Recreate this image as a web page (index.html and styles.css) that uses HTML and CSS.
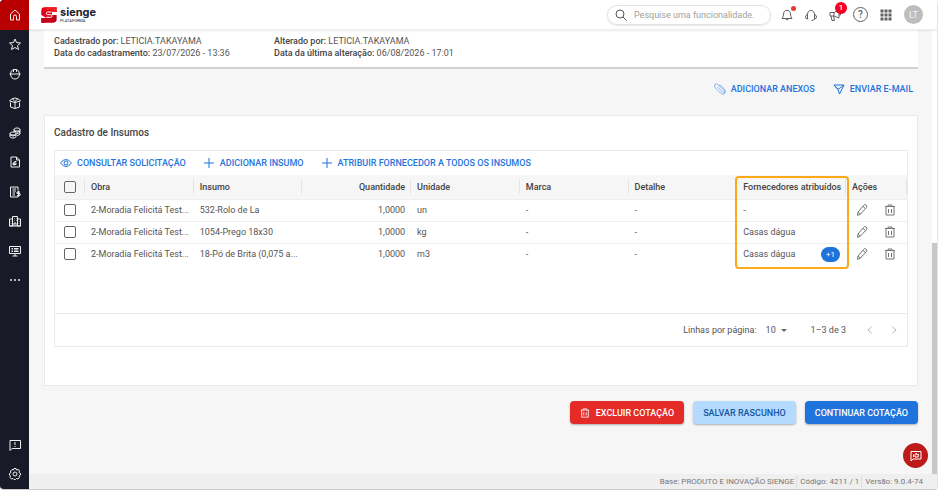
FILE: index.html
```html
<!DOCTYPE html>
<html lang="pt-BR">
	<head>
		<meta charset="UTF-8" />
		<meta name="viewport" content="width=device-width, initial-scale=1.0" />
		<title>Sienge Plataforma</title>
		<link rel="stylesheet" href="styles.css">
	</head>
	<body>
		<!-- shared icons -->
		<svg class="sprite" aria-hidden="true">
			<symbol id="plus" viewBox="0 0 24 24"><path d="M12 2v20M2 12h20" /></symbol>
			<symbol id="pencil" viewBox="0 0 24 24"><path d="M3 23l1-7L15 3q2-3 5-1t1 5L9 20zM14 5l5 4M4 16l5 4" /></symbol>
			<symbol id="trash" viewBox="0 0 24 24"><path d="M2 5h20M8 5V2h8v3M4 5v17h16V5M9 10v8M15 10v8" /></symbol>
		</svg>
		<div class="app">
			<nav class="sidebar">
				<div class="menu">
					<a class="menu-item active" href="#" aria-label="Início">
						<svg class="icon" viewBox="0 0 24 24"><path d="M3 10l9-8 9 8v12h-6v-7q0-3-3-3t-3 3v7H3z" /></svg>
					</a>
					<a class="menu-item" href="#" aria-label="Favoritos">
						<svg class="icon" viewBox="0 0 24 24"><path d="M12 2l3 7 8 1-6 5 2 8-7-4-7 4 2-8-6-5 8-1z" /></svg>
					</a>
					<a class="menu-item" href="#" aria-label="Engenharia">
						<svg class="icon" viewBox="0 0 24 24"><path d="M1 12h22M3 12q0-7 6-9v5M21 12q0-7-6-9v5M9 3h6M3 12q1 10 9 10t9-10" /></svg>
					</a>
					<a class="menu-item" href="#" aria-label="Suprimentos">
						<svg class="icon" viewBox="0 0 24 24"><path d="M3 11v9l9 3 9-3v-9M12 9v14M1 8l11 3 11-3-4-4-7-2-7 2zM7 4l5 5 5-5" /></svg>
					</a>
					<a class="menu-item" href="#" aria-label="Financeiro">
						<svg class="icon" viewBox="0 0 24 24"><path d="M10 5c0-4 12-4 12 0s-12 4-12 0v4M22 5v9q-2 3-6 3M10 8q6 4 12 1M15 13q5 0 7-2M2 13c0-4 12-4 12 0s-12 4-12 0v6c0 4 12 4 12 0v-6M2 16q6 4 12 0" /></svg>
					</a>
					<a class="menu-item" href="#" aria-label="Contabilidade">
						<svg class="icon" viewBox="0 0 24 24"><path d="M4 2h11l6 6v14H4zM15 2v6h6M15 11h-3q-2 0-2 3v5M8 14h6v3H8z" /></svg>
					</a>
					<a class="menu-item" href="#" aria-label="Comercial">
						<svg class="icon" viewBox="0 0 24 24"><path d="M18 9V2H3v20h15v-2M7 6h7M7 10h7M7 14h5M7 18h5M22 12h-6v3h6v4h-6M19 10v11" /></svg>
					</a>
					<a class="menu-item" href="#" aria-label="Patrimônio">
						<svg class="icon" viewBox="0 0 24 24"><path d="M7 22H1V8h6M17 8h6v14h-6M7 22V3h10v19M10 7h1M14 7h1M10 11h1M14 11h1M10 22v-6h4v6M4 12v1M20 12v1M4 17v1M20 17v1M1 22h22" /></svg>
					</a>
					<a class="menu-item" href="#" aria-label="Sistemas">
						<svg class="icon" viewBox="0 0 24 24"><path d="M1 3h22v14H1zM12 17v5M7 22h10M5 7h3M10 7h9M5 10h3M10 10h9M5 13h3M10 13h9" /></svg>
					</a>
					<a class="menu-item" href="#" aria-label="Mais">
						<svg class="icon solid" viewBox="0 0 24 24"><circle cx="4" cy="12" r="2" /><circle cx="12" cy="12" r="2" /><circle cx="20" cy="12" r="2" /></svg>
					</a>
				</div>
				<div class="menu-bottom">
					<a class="menu-item" href="#" aria-label="Avisos">
						<svg class="icon" viewBox="0 0 24 24"><path d="M2 3h21v16H6l-4 4zM12 6v6M12 14v2" /></svg>
					</a>
					<a class="menu-item" href="#" aria-label="Configurações">
						<svg class="icon" viewBox="0 0 24 24"><path d="M10 1h4l1 3 4-1 2 3-1 3 3 2v3l-3 2 1 3-3 3-3-1-2 2h-3l-2-2-3 1-3-3 1-3-2-2v-3l3-2-1-3 3-3 3 1z" /><circle cx="12" cy="12" r="4" /></svg>
					</a>
				</div>
			</nav>
			<div class="page">
				<header class="topbar">
					<a class="logo" href="#" aria-label="sienge plataforma">
						<svg class="logo-mark" viewBox="0 0 48 48">
							<path fill="#e3001b" d="M10 1h37v14H33v18q0 9-9 9l-14 5H1V33h14V23H1V11Q1 1 10 1z" />
							<path fill="#f02020" d="M10 1h37v14H15V4z" />
							<path fill="#c4001a" d="M1 33h14l18-9h14v13q0 10-10 10H1z" />
							<path fill="#e3001b" d="M2 12l13-4h18v24H15L2 25z" />
							<path fill="none" stroke="#fff" stroke-width="3" d="M32 15H20q-4 0-4 4t4 4h9q4 0 4 4t-4 4H16" />
						</svg>
						<span class="logo-text">
							<span class="logo-name">sienge</span>
							<span class="logo-sub">PLATAFORMA</span>
						</span>
					</a>
					<label class="search">
						<svg class="icon" viewBox="0 0 24 24"><circle cx="10" cy="10" r="8" /><path d="M16 16l7 7" /></svg>
						<input type="text" placeholder="Pesquise uma funcionalidade." aria-label="Pesquise uma funcionalidade" />
					</label>
					<div class="tools">
						<button class="tool" aria-label="Notificações">
							<svg class="icon" viewBox="0 0 24 24"><path d="M2 19q3-3 3-9c0-10 14-10 14 0q0 6 3 9zM9 20q3 4 6 0" /></svg>
							<span class="dot"></span>
						</button>
						<button class="tool" aria-label="Suporte">
							<svg class="icon" viewBox="0 0 24 24"><path d="M5 12C4 0 20 0 19 12M5 11q-4 1-4 5t4 4zM19 11q4 1 4 5t-4 4zM19 20q-1 3-6 3" /></svg>
						</button>
						<button class="tool" aria-label="Novidades">
							<svg class="icon" viewBox="0 0 24 24"><path d="M2 7h8l10-5v16l-10-4H2zM10 7v7M4 14l2 9h5l-2-9M20 8h3v4h-3" /></svg>
							<span class="count">1</span>
						</button>
						<button class="tool help" aria-label="Ajuda">?</button>
						<button class="tool" aria-label="Aplicativos">
							<svg class="icon solid" viewBox="0 0 24 24"><path d="M1 1h6v6H1zM9 1h6v6H9zM17 1h6v6h-6zM1 9h6v6H1zM9 9h6v6H9zM17 9h6v6h-6zM1 17h6v6H1zM9 17h6v6H9zM17 17h6v6h-6z" /></svg>
						</button>
						<button class="avatar">LT</button>
					</div>
				</header>
				<div class="scroll">
					<main class="content">
						<section class="info">
							<div>
								<p><b>Cadastrado por:</b> LETICIA.TAKAYAMA</p>
								<p><b>Data do cadastramento:</b> 23/07/2026 - 13:36</p>
							</div>
							<div>
								<p><b>Alterado por:</b> LETICIA.TAKAYAMA</p>
								<p><b>Data da última alteração:</b> 06/08/2026 - 17:01</p>
							</div>
						</section>
						<div class="links">
							<button class="link-btn">
								<svg class="icon thin" viewBox="0 0 24 24"><path d="M7 8l11 11q2 1 3 0t0-3L9 4Q5 0 2 3t1 7l10 10q5 4 8 2M10 5q3-1 5 1l7 8q2 4-1 7" /></svg>
								ADICIONAR ANEXOS
							</button>
							<button class="link-btn">
								<svg class="icon" viewBox="0 0 24 24"><path d="M2 4h20l-9 18-3-9zM10 13L22 4M2 4l8 9" /></svg>
								ENVIAR E-MAIL
							</button>
						</div>
						<section class="card">
							<h2>Cadastro de Insumos</h2>
							<div class="grid-box">
								<div class="toolbar">
									<button class="link-btn">
										<svg class="icon" viewBox="0 0 24 24"><path d="M1 12Q12-2 23 12 12 26 1 12z" /><circle cx="12" cy="12" r="4" /></svg>
										CONSULTAR SOLICITAÇÃO
									</button>
									<button class="link-btn"><svg class="icon"><use href="#plus" /></svg>ADICIONAR INSUMO</button>
									<button class="link-btn"><svg class="icon"><use href="#plus" /></svg>ATRIBUIR FORNECEDOR A TODOS OS INSUMOS</button>
								</div>
								<div class="table-wrap">
									<table>
										<thead>
											<tr>
												<th class="col-check"><input type="checkbox" aria-label="Selecionar todos" /></th>
												<th>Obra</th>
												<th>Insumo</th>
												<th class="num">Quantidade</th>
												<th>Unidade</th>
												<th>Marca</th>
												<th>Detalhe</th>
												<th>Fornecedores atribuídos</th>
												<th class="col-actions">Ações</th>
											</tr>
										</thead>
										<tbody>
											<tr>
												<td class="col-check"><input type="checkbox" aria-label="Selecionar 532-Rolo de La" /></td>
												<td>2-Moradia Felicitá Test...</td>
												<td>532-Rolo de La</td>
												<td class="num">1,0000</td>
												<td>un</td>
												<td>-</td>
												<td>-</td>
												<td>-</td>
												<td class="col-actions">
													<div class="actions">
														<button aria-label="Editar"><svg class="icon"><use href="#pencil" /></svg></button>
														<button aria-label="Excluir"><svg class="icon"><use href="#trash" /></svg></button>
													</div>
												</td>
											</tr>
											<tr>
												<td class="col-check"><input type="checkbox" aria-label="Selecionar 1054-Prego 18x30" /></td>
												<td>2-Moradia Felicitá Test...</td>
												<td>1054-Prego 18x30</td>
												<td class="num">1,0000</td>
												<td>kg</td>
												<td>-</td>
												<td>-</td>
												<td>Casas dágua</td>
												<td class="col-actions">
													<div class="actions">
														<button aria-label="Editar"><svg class="icon"><use href="#pencil" /></svg></button>
														<button aria-label="Excluir"><svg class="icon"><use href="#trash" /></svg></button>
													</div>
												</td>
											</tr>
											<tr>
												<td class="col-check"><input type="checkbox" aria-label="Selecionar 18-Pó de Brita" /></td>
												<td>2-Moradia Felicitá Test...</td>
												<td>18-Pó de Brita (0,075 a...</td>
												<td class="num">1,0000</td>
												<td>m3</td>
												<td>-</td>
												<td>-</td>
												<td><div class="supplier">Casas dágua <span class="chip">+1</span></div></td>
												<td class="col-actions">
													<div class="actions">
														<button aria-label="Editar"><svg class="icon"><use href="#pencil" /></svg></button>
														<button aria-label="Excluir"><svg class="icon"><use href="#trash" /></svg></button>
													</div>
												</td>
											</tr>
										</tbody>
									</table>
									<div class="highlight"></div>
								</div>
								<div class="pagination">
									<label for="rows">Linhas por página:</label>
									<span class="rows-select">
										<select id="rows"><option>10</option><option>25</option></select>
										<svg class="caret" viewBox="0 0 10 5"><path d="M0 0h10L5 5z" /></svg>
									</span>
									<span class="range">1–3 de 3</span>
									<button aria-label="Página anterior"><svg class="icon" viewBox="0 0 24 24"><path d="M16 4l-9 8 9 8" /></svg></button>
									<button aria-label="Próxima página"><svg class="icon" viewBox="0 0 24 24"><path d="M8 4l9 8-9 8" /></svg></button>
								</div>
							</div>
						</section>
						<div class="buttons">
							<button class="btn danger"><svg class="icon"><use href="#trash" /></svg>EXCLUIR COTAÇÃO</button>
							<button class="btn light">SALVAR RASCUNHO</button>
							<button class="btn primary">CONTINUAR COTAÇÃO</button>
						</div>
					</main>
					<div class="scrollbar"><div class="thumb"></div></div>
					<button class="fab" aria-label="Feedback">
						<svg class="icon" viewBox="0 0 24 24"><path d="M2 3h20v15H6l-4 4zM7 9v5M10 9l3-3v3h4l-1 5h-6z" /></svg>
					</button>
				</div>
				<footer class="footer">
					<span>Base: PRODUTO E INOVAÇÃO SIENGE</span>
					<span>Código: 4211 / 1</span>
					<span>Versão: 9.0.4-74</span>
				</footer>
			</div>
		</div>
	</body>
</html>
```

FILE: styles.css
```css
* {
	margin: 0;
	padding: 0;
	box-sizing: border-box;
	font-family: Roboto, "Liberation Sans", sans-serif;
}

body {
	background-color: #fff;
	height: 100vh;
	padding: 0 1px 1px 0;
	font-size: 9px;
	line-height: 12px;
	color: #555;
}

button {
	border: none;
	background: none;
	color: inherit;
	font-size: inherit;
	line-height: inherit;
	cursor: pointer;
}

a {
	color: inherit;
	text-decoration: none;
}

.sprite {
	position: absolute;
	width: 0;
	height: 0;
}

.icon {
	display: block;
	flex: none;
	width: 12px;
	height: 12px;
	fill: none;
	stroke: currentColor;
	stroke-width: 2;
	overflow: visible;
}

.icon.solid {
	fill: currentColor;
	stroke: none;
}

.icon.thin {
	stroke-width: 1;
}

.app {
	display: flex;
	height: 100%;
	border-right: 1px solid #e4e4e4;
	border-bottom: 1px solid #ccc;
	border-radius: 4px;
	overflow: hidden;
}

.sidebar {
	display: flex;
	flex-direction: column;
	justify-content: space-between;
	width: 29px;
	background-color: #191a27;
	color: #f0f0f0;
}

.menu {
	display: flex;
	flex-direction: column;
	height: 295px;
}

.menu-bottom {
	display: flex;
	flex-direction: column;
	height: 59px;
}

.menu-item {
	flex: 1;
	display: flex;
	align-items: center;
	justify-content: center;
}

.menu-item.active {
	background-color: #b80000;
}

.page {
	flex: 1;
	min-width: 0;
	display: flex;
	flex-direction: column;
}

.topbar {
	display: flex;
	align-items: center;
	height: 30px;
	padding: 0 14px 0 12px;
	border-bottom: 1px solid #eee;
	box-shadow: 0 1px 2px rgba(0, 0, 0, 0.08);
	background-color: #fff;
	z-index: 1;
}

.logo {
	display: flex;
	align-items: center;
	gap: 3px;
	margin-right: auto;
}

.logo-mark {
	width: 16px;
	height: 16px;
}

.logo-text {
	display: flex;
	flex-direction: column;
	color: #20212f;
}

.logo-name {
	font-family: Inter, sans-serif;
	font-size: 11px;
	font-weight: 700;
	line-height: 11px;
}

.logo-sub {
	font-size: 4px;
	line-height: 5px;
}

.search {
	display: flex;
	align-items: center;
	gap: 7px;
	width: 164px;
	height: 20px;
	padding: 0 7px;
	border: 1px solid #e2e2e2;
	border-radius: 10px;
	box-shadow: 0 1px 2px rgba(0, 0, 0, 0.1);
}

.search input {
	flex: 1;
	min-width: 0;
	border: none;
	outline: none;
	font-size: 9px;
	background: none;
}

.search input::placeholder {
	color: #a0a0a0;
}

.tools {
	display: flex;
	align-items: center;
	gap: 12px;
	margin-left: 10px;
	color: #616161;
}

.tool {
	position: relative;
}

.dot {
	position: absolute;
	top: -3px;
	right: -3px;
	width: 5px;
	height: 5px;
	border-radius: 50%;
	background-color: #e53935;
}

.count {
	position: absolute;
	top: -7px;
	right: -6px;
	width: 12px;
	height: 12px;
	border-radius: 50%;
	background-color: #f5001d;
	color: #fff;
	font-size: 8px;
	font-weight: 500;
}

.help {
	width: 15px;
	height: 15px;
	border: 1px solid #616161;
	border-radius: 50%;
	font-size: 10px;
	font-weight: 500;
}

.avatar {
	width: 19px;
	height: 19px;
	border-radius: 50%;
	background-color: #bdbdbd;
	color: #f5f5f5;
}

.scroll {
	position: relative;
	flex: 1;
	min-height: 0;
	display: flex;
	background-color: #f6f6f6;
}

.content {
	flex: 1;
	min-width: 0;
	padding: 0 14px 0 15px;
}

.info {
	display: grid;
	grid-template-columns: 220px 1fr;
	padding: 5px 10px 8px;
	border-bottom: 2px solid #d2d2d2;
	background-color: #fff;
}

b {
	font-weight: 500;
	color: #444;
}

.links {
	display: flex;
	justify-content: flex-end;
	gap: 18px;
	padding: 14px 5px 20px;
}

.link-btn {
	display: flex;
	align-items: center;
	gap: 5px;
	color: #1f73dc;
	font-weight: 500;
}

.card {
	padding: 10px 9px 38px;
	border: 1px solid #eaeaea;
	background-color: #fff;
}

h2 {
	margin-bottom: 10px;
	font-size: 10px;
	font-weight: 500;
	line-height: 14px;
	color: #444;
}

.grid-box {
	border: 1px solid #eaeaea;
}

.toolbar {
	display: flex;
	gap: 17px;
	padding: 6px 5px;
}

.table-wrap {
	position: relative;
	min-height: 138px;
}

table {
	width: 100%;
	table-layout: fixed;
	border-collapse: collapse;
}

th,
td {
	height: 22px;
	padding: 0 0 0 6px;
	border-bottom: 1px solid #eee;
	text-align: left;
	white-space: nowrap;
}

th {
	height: 24px;
	background: linear-gradient(#e4e4e4, #e4e4e4) right center / 1px 15px no-repeat #f6f6f6;
	font-weight: 500;
	color: #444;
}

tbody tr:last-child td {
	border-bottom: none;
}

.num {
	padding-right: 6px;
	text-align: right;
}

.col-check {
	width: 30px;
	padding: 0 9px;
}

.col-actions {
	width: 61px;
}

input[type="checkbox"] {
	display: block;
	appearance: none;
	width: 12px;
	height: 12px;
	border: 1px solid #666;
	border-radius: 2px;
}

.actions {
	display: flex;
	gap: 16px;
	padding-left: 4px;
	color: #757575;
}

.btn .icon,
.pagination .icon {
	width: 10px;
	height: 10px;
}

.supplier {
	display: flex;
	align-items: center;
	justify-content: space-between;
	padding-right: 6px;
}

.chip {
	width: 19px;
	height: 15px;
	border-radius: 8px;
	background-color: #1f73dc;
	color: #fff;
	font-size: 8px;
	line-height: 15px;
	text-align: center;
}

/* outline over the suppliers column */
.highlight {
	position: absolute;
	top: 1px;
	right: 58px;
	width: calc((100% - 91px) / 7 + 5px);
	height: 93px;
	border: 2px solid #fba919;
	border-radius: 4px;
}

.pagination {
	display: flex;
	align-items: center;
	justify-content: flex-end;
	height: 33px;
	padding-right: 8px;
	border-top: 1px solid #eaeaea;
}

.rows-select {
	display: flex;
	align-items: center;
	gap: 4px;
	margin-left: 9px;
}

select {
	appearance: none;
	border: none;
	background: none;
	font-size: 9px;
	color: #555;
}

.caret {
	width: 6px;
	height: 3px;
	fill: #666;
}

.range {
	margin: 0 19px 0 24px;
}

.pagination button {
	color: #aaa;
}

.pagination button + button {
	margin-left: 14px;
}

.buttons {
	display: flex;
	justify-content: flex-end;
	gap: 9px;
	padding: 15px 0;
}

.btn {
	display: flex;
	align-items: center;
	gap: 6px;
	height: 23px;
	padding: 0 10px;
	border-radius: 4px;
	box-shadow: 0 1px 2px rgba(0, 0, 0, 0.3);
	font-weight: 500;
	color: #fff;
}

.danger {
	background-color: #e52b28;
}

.light {
	background-color: #b5daff;
	color: #15569c;
}

.primary {
	background-color: #1f73dc;
}

.scrollbar {
	display: flex;
	flex-direction: column;
	justify-content: flex-end;
	width: 5px;
	background-color: #fff;
}

.thumb {
	height: 52%;
	background-color: #c8c8c8;
}

.fab {
	position: absolute;
	right: 9px;
	bottom: 6px;
	display: flex;
	align-items: center;
	justify-content: center;
	width: 25px;
	height: 25px;
	border-radius: 50%;
	background-color: #bd1a1a;
	color: #fff;
}

.footer {
	display: flex;
	justify-content: flex-end;
	height: 15px;
	padding: 2px 14px 0 0;
	background-color: #efefef;
	font-size: 8px;
	color: #777;
}

.footer span + span {
	margin-left: 2px;
	padding-left: 3px;
	border-left: 1px solid #ddd;
}
```
